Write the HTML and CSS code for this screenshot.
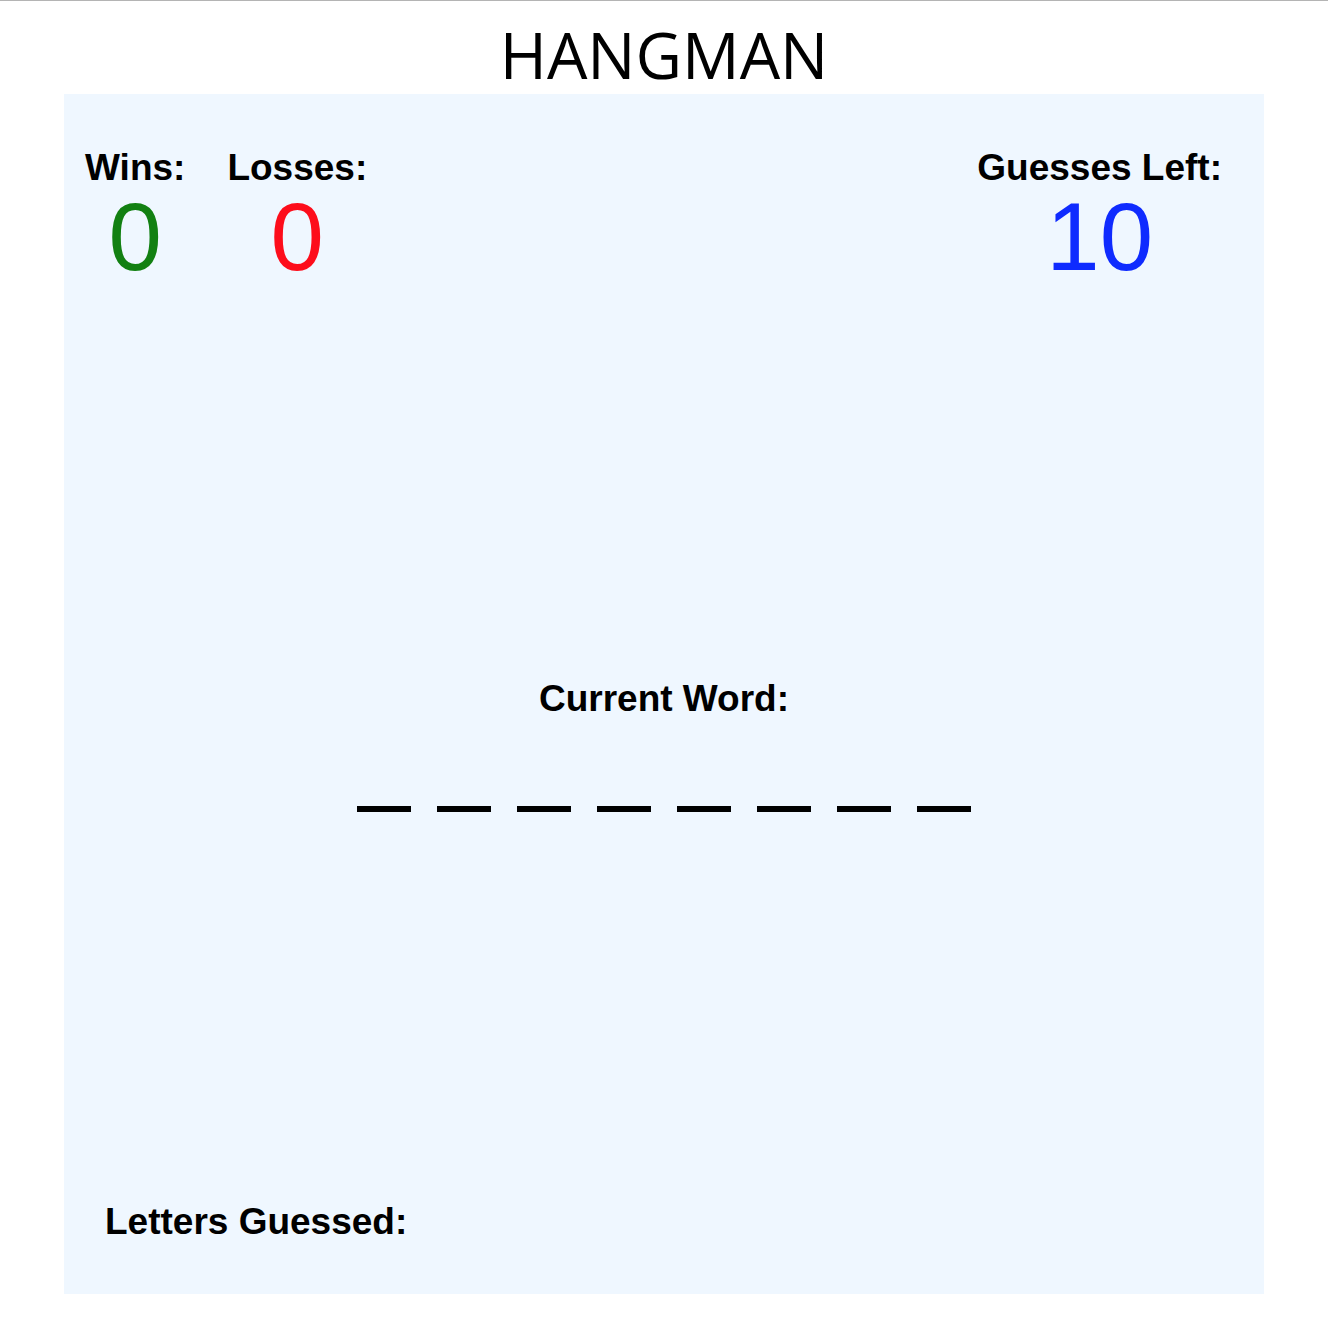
FILE: index.html
```html
<!DOCTYPE html>
<html lang="en">
<head>
<meta charset="utf-8">
<title>Hangman</title>
<link rel="stylesheet" href="styles.css">
</head>
<body>
<div class="topline"></div>
<h1 class="title">HANGMAN</h1>
<main class="panel">
  <section class="stats">
    <div class="stat">
      <div class="label">Wins:</div>
      <div class="num wins">0</div>
    </div>
    <div class="stat">
      <div class="label">Losses:</div>
      <div class="num losses">0</div>
    </div>
    <div class="spacer"></div>
    <div class="stat">
      <div class="label">Guesses Left:</div>
      <div class="num guesses">10</div>
    </div>
  </section>
  <section class="word">
    <div class="label">Current Word:</div>
    <div class="dashes">
      <span class="dash"></span><span class="dash"></span><span class="dash"></span><span class="dash"></span>
      <span class="dash"></span><span class="dash"></span><span class="dash"></span><span class="dash"></span>
    </div>
  </section>
  <section class="guessed">
    <div class="label">Letters Guessed:</div>
  </section>
</main>
</body>
</html>
```

FILE: styles.css
```css
html, body {
  margin: 0;
  padding: 0;
  background: #ffffff;
}

body {
  font-family: "Liberation Sans", Arial, sans-serif;
  color: #000;
}

.topline {
  height: 1px;
  background: #b4b4b4;
}

.title {
  margin: 0;
  padding-top: 15px;
  height: 78px;
  line-height: 78px;
  text-align: center;
  font-family: "Open Sans", "Noto Sans", sans-serif;
  font-weight: 400;
  font-size: 64px;
}

.panel {
  margin: 0 64px;
  height: 1200px;
  box-sizing: border-box;
  background: #eff7ff;
  display: flex;
  flex-direction: column;
  padding-top: 53px;
  padding-bottom: 51px;
}

.label {
  font-weight: 700;
  font-size: 37px;
  line-height: 42px;
  white-space: nowrap;
}

.stats {
  display: flex;
  padding-right: 21px;
}

.stat {
  margin: 0 21px;
  display: flex;
  flex-direction: column;
  align-items: center;
}

.spacer {
  flex: 1;
}

.num {
  font-size: 96px;
  line-height: 96px;
  font-weight: 400;
}

.wins { color: #128012; }
.losses { color: #fd0d1b; }
.guesses { color: #0f2bff; }

.word {
  margin-top: 393px;
  display: flex;
  flex-direction: column;
  align-items: center;
}

.dashes {
  margin-top: 86px;
  display: flex;
  gap: 26px;
}

.dash {
  width: 54px;
  height: 6px;
  background: #000;
}

.guessed {
  margin-top: auto;
  padding-left: 41px;
}
```
